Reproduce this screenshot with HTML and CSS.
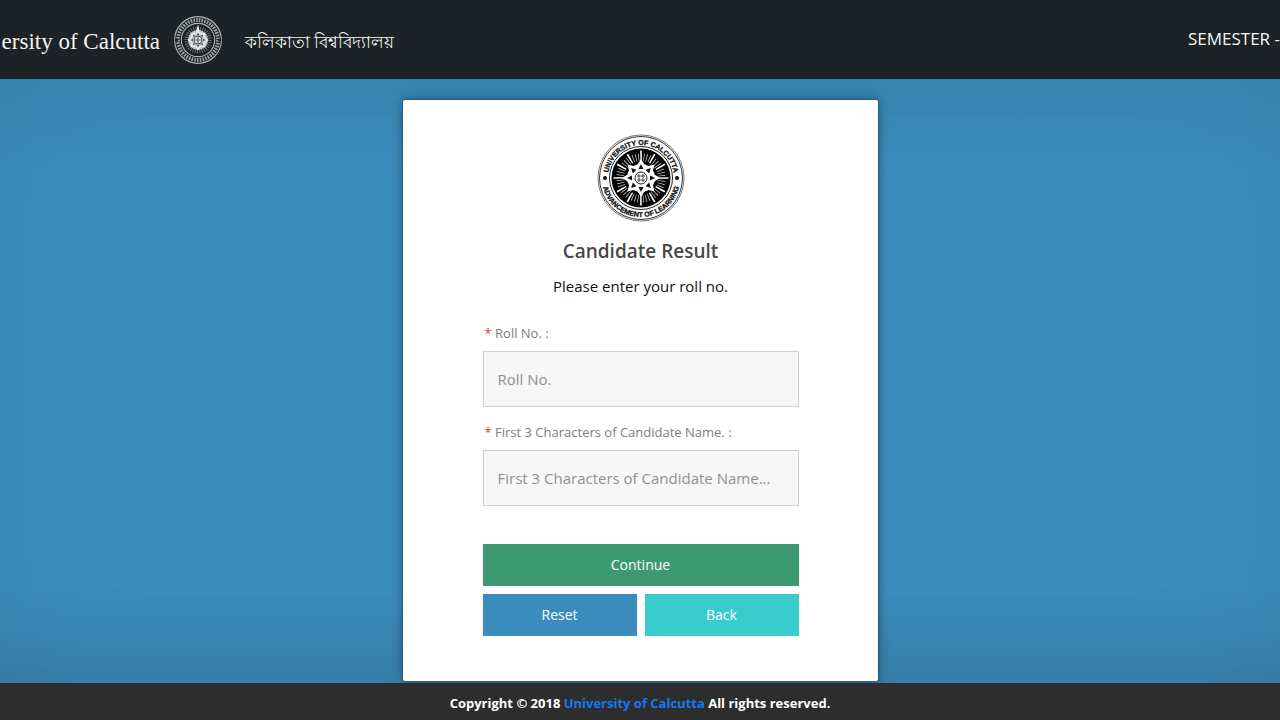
FILE: index.html
```html
<!DOCTYPE html>
<html lang="en">
<head>
<meta charset="utf-8">
<meta name="viewport" content="width=device-width, initial-scale=1">
<title>Candidate Result</title>
<link rel="stylesheet" href="styles.css">
</head>
<body>
<svg class="defs" aria-hidden="true">
  <defs>
    <path id="arc-top" d="M-33 0A33 33 0 0 1 33 0"/>
    <path id="arc-bottom" d="M-39 0A39 39 0 0 0 39 0"/>
    <path id="petal" d="M-5 -11L0 -19L5 -11Z"/>
    <path id="tooth" d="M-2.5 -9L0 -14L2.5 -9Z"/>
    <g id="petals">
      <use href="#petal"/><use href="#petal" transform="rotate(45)"/><use href="#petal" transform="rotate(90)"/><use href="#petal" transform="rotate(135)"/><use href="#petal" transform="rotate(180)"/><use href="#petal" transform="rotate(225)"/><use href="#petal" transform="rotate(270)"/><use href="#petal" transform="rotate(315)"/>
    </g>
    <g id="teeth">
      <use href="#tooth"/><use href="#tooth" transform="rotate(45)"/><use href="#tooth" transform="rotate(90)"/><use href="#tooth" transform="rotate(135)"/><use href="#tooth" transform="rotate(180)"/><use href="#tooth" transform="rotate(225)"/><use href="#tooth" transform="rotate(270)"/><use href="#tooth" transform="rotate(315)"/>
    </g>
  </defs>
</svg>
<header class="header">
  <div class="brand">
    <span class="brand-name">ersity of Calcutta</span>
    <svg class="brand-seal" viewBox="-45 -45 90 90" aria-hidden="true">
      <g fill="none" stroke="#aeb3b5">
        <circle r="42" stroke-width="2"/>
        <circle r="36" stroke-width="7" stroke="#969b9e" stroke-dasharray="3 2"/>
        <circle r="30" stroke-width="2"/>
        <circle r="20" stroke-width="9" stroke="#7d8285" pathLength="96" stroke-dasharray="1 2"/>
      </g>
      <circle r="18" fill="#c8cbcc"/>
      <path d="M-3 -16L0 -28L3 -16Z" fill="#fff"/>
      <circle cx="-39" r="3" fill="#1c2225"/><circle cx="39" r="3" fill="#1c2225"/>
      <use href="#petals" fill="#eef0f0"/>
      <use href="#teeth" fill="#5c6366"/>
      <circle r="7" fill="#e4e6e7" stroke="#4f5659" stroke-width="2"/>
      <path d="M-5 0H5M0 -5V5" stroke="#4f5659" stroke-width="2"/>
    </svg>
    <span class="brand-native" lang="bn">কলিকাতা বিশ্ববিদ্যালয়</span>
  </div>
  <div class="session">SEMESTER -</div>
</header>
<main class="main">
  <form class="card">
    <svg class="seal" viewBox="-44 -44 88 88" role="img" aria-label="University of Calcutta seal">
      <circle r="43" fill="#fff" stroke="#777" stroke-width="1"/>
      <circle r="41.5" fill="none" stroke="#333" stroke-width="1"/>
      <circle r="31.5" fill="none" stroke="#222" stroke-width="1"/>
      <circle r="29.5" fill="#050505"/>
      <circle r="20" fill="none" stroke="#ddd" stroke-width="9" pathLength="192" stroke-dasharray="1 3"/>
      <circle r="22" fill="none" stroke="#fff" stroke-width="11" pathLength="192" stroke-dasharray="2 14" stroke-dashoffset="1"/>
      <circle r="17" fill="#050505"/>
      <circle r="14" fill="#fff"/>
      <use href="#petals" fill="#fff"/>
      <use href="#teeth" fill="#111"/>
      <circle r="8" fill="#fff"/>
      <circle r="6" fill="#fff" stroke="#222" stroke-width="1"/>
      <path d="M-4 -2H4M-4 2H4M-2 -4V4M2 -4V4" stroke="#444" stroke-width="1"/>
      <circle cx="-36" r="2" fill="#111"/><circle cx="36" r="2" fill="#111"/>
      <text class="seal-text" text-anchor="middle"><textPath href="#arc-top" startOffset="50%">UNIVERSITY OF CALCUTTA</textPath></text>
      <text class="seal-text" text-anchor="middle"><textPath href="#arc-bottom" startOffset="50%">ADVANCEMENT OF LEARNING</textPath></text>
    </svg>
    <h1 class="title">Candidate Result</h1>
    <p class="hint">Please enter your roll no.</p>
    <label class="label" for="roll"><span class="required">*</span> Roll No. :</label>
    <input class="input" id="roll" type="text" placeholder="Roll No.">
    <label class="label" for="name"><span class="required">*</span> First 3 Characters of Candidate Name. :</label>
    <input class="input" id="name" type="text" placeholder="First 3 Characters of Candidate Name...">
    <div class="actions">
      <button class="button button-continue" type="submit">Continue</button>
      <button class="button button-reset" type="reset">Reset</button>
      <button class="button button-back" type="button">Back</button>
    </div>
  </form>
</main>
<footer class="footer">Copyright © 2018 <a href="#">University of Calcutta</a> All rights reserved.</footer>
</body>
</html>
```
FILE: styles.css
```css
* { box-sizing: border-box; }
body {
  margin: 0;
  min-height: 100vh;
  display: flex;
  flex-direction: column;
  overflow-x: hidden;
  font-family: "Open Sans", "Noto Sans", sans-serif;
  font-size: 15px;
  line-height: 20px;
  background: #3c8dbc;
}
.defs { position: absolute; width: 0; height: 0; }
.header {
  display: flex;
  align-items: center;
  justify-content: space-between;
  padding: 14px 0 13px;
  background: #1c2225;
  color: #f4f4f4;
  white-space: nowrap;
}
.brand { display: flex; align-items: center; }
.brand-name {
  min-width: 160px;
  padding-top: 4px;
  text-align: right;
  font-family: "Liberation Serif", serif;
  font-size: 23px;
  line-height: 28px;
}
.brand-seal { width: 50px; height: 52px; margin: 0 22px 0 13px; }
.brand-native { padding-top: 3px; font-size: 17px; font-weight: 500; line-height: 28px; }
.session { font-size: 17px; line-height: 24px; padding-bottom: 2px; }
.main {
  flex: 1;
  display: flex;
  justify-content: center;
  align-items: flex-start;
  padding: 21px 16px 2px;
  background: linear-gradient(rgba(0, 0, 0, 0.04), transparent 100px, transparent calc(100% - 100px), rgba(0, 0, 0, 0.08));
  box-shadow: inset 0 0 120px rgba(0, 0, 0, 0.06);
}
.card {
  display: flex;
  flex-direction: column;
  width: 100%;
  max-width: 475px;
  padding: 34px 79px 45px 80px;
  background: #fff;
  border-radius: 2px;
  box-shadow: 0 0 2px #173a4e, 0 0 12px rgba(0, 0, 0, 0.4);
}
.seal { width: 88px; height: 88px; align-self: center; }
.seal-text { font-family: "Liberation Sans", sans-serif; font-size: 7px; font-weight: 700; fill: #111; stroke: #111; stroke-width: 0.3; }
.title { margin: 15px 0 9px; text-align: center; font-size: 19px; font-weight: 600; line-height: 28px; color: #484848; }
.hint { margin: 0 0 25px; text-align: center; line-height: 24px; color: #111; }
.label { margin-bottom: 8px; padding-left: 2px; font-size: 13px; line-height: 20px; color: #7d7d7d; }
.required { color: #e53935; }
.input {
  width: 100%;
  height: 56px;
  padding: 0 14px;
  border: 1px solid #d0d0d0;
  border-radius: 0;
  background: #f7f7f7;
  font: inherit;
  color: #444;
}
.input + .label { margin-top: 15px; }
.input::placeholder { color: #8d9196; opacity: 1; }
.actions { display: grid; grid-template-columns: 1fr 1fr; gap: 8px; margin-top: 38px; }
.button { height: 42px; border: 0; padding: 0; color: #fff; font: inherit; font-size: 14px; cursor: pointer; }
.button-continue { grid-column: 1 / -1; background: #3d9970; }
.button-reset { background: #3c8dbc; }
.button-back { background: #39cccc; }
.footer { padding: 10px 16px 7px; background: #2d2d2d; color: #fff; text-align: center; font-size: 13px; font-weight: 700; line-height: 20px; }
.footer a { color: #1479f5; text-decoration: none; }
```
